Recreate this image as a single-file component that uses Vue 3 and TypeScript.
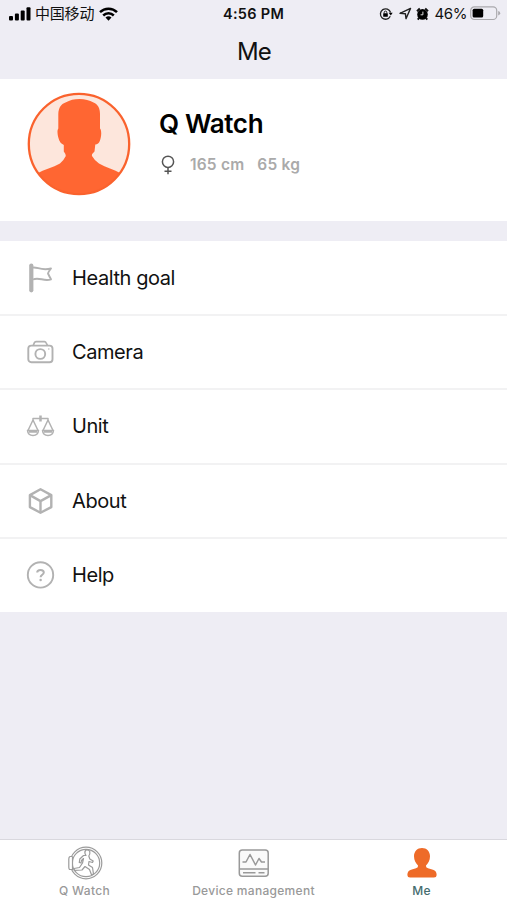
<script setup lang="ts">
import { ref } from 'vue'

type IconName = 'flag' | 'camera' | 'scales' | 'cube' | 'help'
interface MenuItem { label: string; icon: IconName }

const menu: MenuItem[] = [
  { label: 'Health goal', icon: 'flag' },
  { label: 'Camera', icon: 'camera' },
  { label: 'Unit', icon: 'scales' },
  { label: 'About', icon: 'cube' },
  { label: 'Help', icon: 'help' },
]
const tabs = ['Q Watch', 'Device management', 'Me']
const active = ref('Me')
</script>

<template>
  <div class="screen">
    <header class="top">
      <div class="status">
        <div class="left">
          <svg class="signal" width="22" height="14" viewBox="0 0 22 14">
            <rect x="0" y="9" width="4" height="4.6" rx="1" />
            <rect x="5.9" y="6.6" width="4" height="7" rx="1" />
            <rect x="11.7" y="3.5" width="4" height="10.1" rx="1" />
            <rect x="17.5" y="0.2" width="4" height="13.4" rx="1" />
          </svg>
          <span class="carrier">中国移动</span>
          <svg class="wifi" width="19" height="14" viewBox="0 0 19 14">
            <g fill="none" stroke="#000" stroke-width="2.5">
              <path d="M1 5.1A12.2 12.2 0 0 1 18 5.1" />
              <path d="M4.2 8.5A7.6 7.6 0 0 1 14.8 8.5" />
            </g>
            <path d="M6.5 10.6Q9.5 8.1 12.5 10.6L9.5 13.7Z" />
          </svg>
        </div>
        <span class="clock">4:56 PM</span>
        <div class="right">
          <svg width="14" height="14" viewBox="0 0 14 14">
            <path d="M11.600 5.500A5.200 5.200 0 1 0 11.300 9.300" fill="none" stroke="#222" stroke-width="1.300" />
            <path d="M9.700 5.700H13.700L11.800 8.500Z" />
            <rect x="4.200" y="6.300" width="4.600" height="3.500" rx=".5" />
            <path d="M5.200 6.600V5.400a1.300 1.300 0 0 1 2.600 0V6.600" fill="none" stroke="#222" />
          </svg>
          <svg class="arrow" width="13" height="13" viewBox="0 0 13 13">
            <path d="M1 6.300L11.500 1.400L7 11.700L6.400 6.700Z" fill="none" stroke="#222" stroke-width="1.400" stroke-linejoin="round" />
          </svg>
          <svg class="alarm" width="13" height="14" viewBox="0 0 13 14">
            <circle cx="6.500" cy="7.400" r="5.300" />
            <path d="M1 4.200L3.800 1.600M12 4.200L9.200 1.600M3 11L1.800 12.600M10 11L11.200 12.600" stroke="#111" stroke-width="2" />
            <path d="M6.900 4.600V7.800H4.600" fill="none" stroke="#ddd" stroke-width="1" />
          </svg>
          <span class="percent">46%</span>
          <svg class="battery" width="31" height="15" viewBox="0 0 31 15">
            <rect x=".7" y=".9" width="26" height="12.600" rx="3.600" fill="none" stroke="#aaa9ad" stroke-width="1.200" />
            <rect x="2.600" y="2.800" width="10.600" height="8.800" rx="1.500" />
            <path d="M28.200 5V9.500Q30.200 8.800 30.200 7.200T28.200 5Z" fill="#aaa9ad" />
          </svg>
        </div>
      </div>
      <h1>Me</h1>
    </header>

    <section class="profile">
      <svg class="avatar" width="104" height="104" viewBox="0 0 104 104">
        <defs><clipPath id="disc"><circle cx="52" cy="52" r="50" /></clipPath></defs>
        <circle cx="52" cy="52" r="50.300" fill="#fde6dc" />
        <path clip-path="url(#disc)" fill="#ff6632" d="M31.300 22C31.500 16 34 12 38.500 10.500C43 8 47 7 52.500 7C58 7 62.500 8.200 66.500 10.500C71 12.500 73 16 73 22V36.500C75 38.500 74.300 45 72.800 49Q71.500 52.300 68.300 52.600L67.500 59.500Q64.500 62 65 64Q67.500 68.500 72 71.500C79 75.500 87 77.500 94 81.500V104H10V81.500C17 77.500 26 75.500 33 71.500Q37 68 38.800 64Q38.800 62 36.800 59.500L36.800 53Q33.500 52 32.300 48.500C30.500 44 29.800 38.500 31.300 36.500Z" />
        <circle cx="52" cy="52" r="50.200" fill="none" stroke="#fa622d" stroke-width="2.300" />
      </svg>
      <div class="details">
        <h2>Q Watch</h2>
        <div class="facts">
          <svg width="14" height="20" viewBox="0 0 14 20" fill="none" stroke="#555" stroke-width="1.500">
            <circle cx="7" cy="6.800" r="5.600" />
            <path d="M7 12.400V19.200M3.500 16.200H10.500" />
          </svg>
          <span class="height">165 cm</span>
          <span class="weight">65 kg</span>
        </div>
      </div>
    </section>

    <nav class="menu">
      <div v-for="item in menu" :key="item.label" class="row">
        <svg class="icon" width="32" height="32" viewBox="0 0 32 32" fill="none" stroke="#b2b2b2" stroke-width="1.900" stroke-linejoin="round">
          <template v-if="item.icon === 'flag'">
            <path d="M7.300 3.500V28.300" stroke-width="4.200" stroke-linecap="round" />
            <path d="M8.500 5.700C13 4.500 17 9 27 6.500Q24.500 9.500 24 11.500Q25.300 14.300 27 17.300C20 20 15 14.500 9 17.500" />
          </template>
          <template v-else-if="item.icon === 'camera'">
            <rect x="4.300" y="9.600" width="24.200" height="16.600" rx="3" />
            <path d="M9.200 9.600L10.400 6.600Q10.800 5.600 12 5.600H20.500Q21.600 5.600 22 6.600L23.600 9.600" stroke-width="1.600" />
            <circle cx="16.300" cy="18" r="4.900" />
            <path d="M24 13H25.500" stroke-width="1.200" />
          </template>
          <g v-else-if="item.icon === 'scales'" stroke-width="1.500">
            <path d="M16.500 5.500V11.500" stroke-width="2.500" />
            <path d="M9 10V8.500H24V10M9 10L4 20.500M9 10L14 20.500M24 10L19 20.500M24 10L29 20.500" />
            <path d="M3.500 20.500H14.500Q14 25.400 9 25.400T3.500 20.500ZM18.500 20.500H29.500Q29 25.400 24 25.400T18.500 20.500Z" />
            <path d="M5 21.500H13M20 21.500H28" stroke-width="2.400" />
          </g>
          <g v-else-if="item.icon === 'cube'" stroke-width="2.400">
            <path d="M16.500 4.300L27.300 10.100V22.100L16.500 27.700L5.900 22.100V10.100Z" />
            <path d="M5.900 10.100L16.500 16.100L27.300 10.100M16.500 16.100V27.300" />
          </g>
          <template v-else>
            <circle cx="16.500" cy="15.900" r="12.700" />
            <path d="M13.200 13.500Q13.200 10.900 16.500 10.900T19.800 13.400C19.800 15.700 16.600 15.700 16.600 18.200" stroke-width="2" />
            <circle cx="16.600" cy="20.900" r="1.250" fill="#b2b2b2" stroke="none" />
          </template>
        </svg>
        <span class="label">{{ item.label }}</span>
      </div>
    </nav>

    <footer class="tabs">
      <button v-for="(tab, i) in tabs" :key="tab" class="tab" :class="{ active: active === tab }" @click="active = tab">
        <svg v-if="i === 0" width="36" height="36" viewBox="0 0 36 36" fill="none" stroke="#9b9b9b" stroke-width="1.200" stroke-linejoin="round">
          <circle cx="19" cy="18" r="15.800" />
          <circle cx="19" cy="18" r="13.700" />
          <path d="M5.500 11.500H3Q1.800 12 1.800 14V22Q1.800 24.500 3 24.500H5.500V11.500" fill="#fff" />
          <path d="M18.500 5.300Q21.500 4.200 22.800 6.500Q23.300 9 21.800 11L22.800 14L26.200 16L25.500 17.500L22 16.500L21.500 20L25.500 22.500L26.500 29L24.500 29.800L22.500 24.500L18 21.500L15 25L7.300 25.300L7 23.500L12.500 22.500L15.500 18L16.500 13.500L14.500 15.500L14 18L12.300 17.500L12.800 14L16.500 10.500H19Q17 7.500 18.500 5.300Z" />
        </svg>
        <svg v-else-if="i === 1" width="36" height="36" viewBox="0 0 36 36" fill="none" stroke="#999" stroke-width="1.500" stroke-linejoin="round">
          <rect x="3.300" y="5" width="28.900" height="26.200" rx="3" fill="#fafafa" />
          <path d="M3.300 24H32.200M7 27.700H19.500M22.500 27.700H28.500" />
          <path d="M6.500 17H10L14 9.500L19.500 20L23 13.500L25.500 17H29" />
        </svg>
        <svg v-else width="36" height="36" viewBox="0 0 36 36" fill="#ee6b28">
          <path d="M18 3C22.700 3 26 6.500 26 11.200C26 15.500 24 18.500 22 20.500Q21.500 22.500 24 23.300L29 24.700Q32.600 26 32.600 29.500V30.300Q32.600 32.500 30 32.500H6Q3.400 32.500 3.400 30.300V29.500Q3.400 26 7 24.700L12 23.300Q14.500 22.500 14 20.500C12 18.500 10 15.500 10 11.200C10 6.500 13.300 3 18 3Z" />
        </svg>
        <span>{{ tab }}</span>
      </button>
    </footer>
  </div>
</template>

<style>
body { margin: 0; background: #eeedf4; }
</style>

<style scoped>
.screen { width: 507px; height: 900px; display: flex; flex-direction: column; background: #eeedf4; font-family: Inter, "Noto Sans CJK SC", sans-serif; color: #111; overflow: hidden; }
.top { height: 79px; flex: none; }
.status { height: 27px; display: grid; grid-template-columns: 1fr auto 1fr; align-items: center; }
.left { display: flex; align-items: center; padding-left: 9px; }
.carrier { font-size: 15px; line-height: 20px; margin-left: 4px; letter-spacing: -0.2px; }
.wifi { margin-left: 5px; }
.clock { font-size: 14.5px; font-weight: 600; letter-spacing: .3px; }
.right { display: flex; align-items: center; justify-content: flex-end; padding-right: 6px; }
.arrow { margin-left: 6px; }
.alarm { margin-left: 4px; }
.percent { font-size: 15px; letter-spacing: -.4px; margin-left: 5px; }
.battery { margin-left: 3px; }
h1 { margin: 9px 0 0 1px; font-size: 24px; line-height: 32px; font-weight: 400; letter-spacing: -.8px; text-align: center; }
.profile { height: 142px; flex: none; box-sizing: border-box; background: #fff; display: flex; padding: 13px 0 0 27px; }
.avatar { flex: none; }
.details { padding: 15px 0 0 28px; }
h2 { margin: 0; font-size: 26px; line-height: 34px; font-weight: 600; letter-spacing: -.35px; color: #000; white-space: nowrap; }
.facts { display: flex; align-items: center; height: 20px; margin-top: 14px; padding-left: 2px; color: #aaa; font-size: 15.5px; font-weight: 600; letter-spacing: .2px; white-space: nowrap; }
.facts span { margin-top: -2px; }
.height { margin-left: 15px; }
.weight { margin-left: 13px; }
.menu { margin-top: 20px; height: 371px; flex: none; display: grid; grid-template-rows: repeat(5, 1fr); background: #fff; }
.row { display: flex; align-items: center; padding-left: 24px; position: relative; }
.row + .row::before { content: ""; position: absolute; inset: -1px 0 auto; height: 2px; background: #f2f2f3; }
.label { margin-left: 16px; font-size: 20px; line-height: 28px; letter-spacing: -.42px; }
.tabs { margin-top: auto; height: 61px; box-sizing: border-box; border-top: 1px solid #d9d8de; background: #fff; display: grid; grid-template-columns: repeat(3, 1fr); }
.tab { appearance: none; border: 0; background: none; padding: 5px 0 0; font: 500 12px/16px Inter, sans-serif; letter-spacing: .3px; color: #999; display: flex; flex-direction: column; align-items: center; }
.tab span { margin-top: 2px; white-space: nowrap; }
.tab.active { color: #456c6e; padding-right: 2px; }
</style>
